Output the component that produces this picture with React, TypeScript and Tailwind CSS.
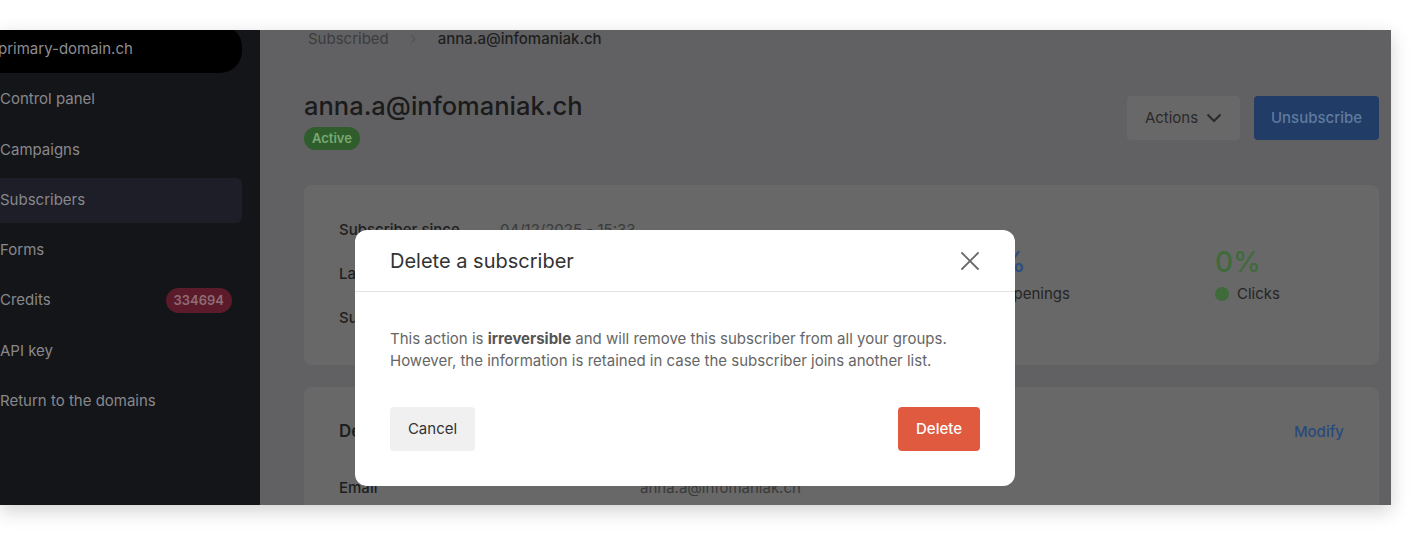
const navItems = [
  { label: "Control panel" },
  { label: "Campaigns" },
  { label: "Subscribers", active: true },
  { label: "Forms" },
  { label: "Credits", badge: "334694" },
  { label: "API key" },
  { label: "Return to the domains" },
];

const Sidebar = () => {
  return (
    <aside className="w-[260px] shrink-0 bg-[#141519] flex flex-col">
      <div className="mt-[-5px] h-[48px] w-[242px] bg-black rounded-r-[22px] flex items-center shrink-0">
        <span className="ml-[-2px] text-[15px] text-[#8c8c90]">primary-domain.ch</span>
      </div>
      <div className="mt-[4px] flex flex-col gap-[5.3px]">
        {navItems.map((item) => (
          <div
            key={item.label}
            className={`h-[45px] w-[242px] shrink-0 flex items-center justify-between pr-[10px] rounded-r-md ${
              item.active ? "bg-[#1d1e27]" : ""
            }`}
          >
            <span className="text-[15px] text-[#88888c]">{item.label}</span>
            {item.badge && (
              <span className="h-[25px] px-[8px] flex items-center rounded-full bg-[#5c1b2b] text-[13px] font-semibold text-[#8f6c74]">
                {item.badge}
              </span>
            )}
          </div>
        ))}
      </div>
    </aside>
  );
};

type StatProps = {
  value: string;
  label: string;
  valueColor: string;
  dotColor: string;
};

const Stat = ({ value, label, valueColor, dotColor }: StatProps) => {
  return (
    <div className="flex flex-col">
      <span className={`text-[28px] leading-[34px] font-medium ${valueColor}`}>{value}</span>
      <div className="flex items-center gap-[8px] mt-[5px] h-[20px]">
        <span className={`w-[14px] h-[14px] rounded-full ${dotColor}`} />
        <span className="text-[15px] text-[#252525]">{label}</span>
      </div>
    </div>
  );
};

const CloseIcon = () => (
  <svg width="20" height="20" viewBox="0 0 20 20" fill="none">
    <path d="M2 2L18 18M18 2L2 18" stroke="#6a6a6a" strokeWidth="1.8" strokeLinecap="round" />
  </svg>
);

const DeleteModal = () => {
  return (
    <div className="absolute left-[355px] top-[200px] w-[660px] h-[256px] bg-white rounded-[12px] flex flex-col">
      <div className="h-[62px] shrink-0 flex items-center justify-between pl-[35px] pr-[35px] border-b border-[#e2e2e2]">
        <h2 className="text-[20px] text-[#333333]">Delete a subscriber</h2>
        <CloseIcon />
      </div>
      <div className="px-[35px] pt-[36px]">
        <p className="text-[15px] leading-[22px] text-[#666666]">
          This action is <strong className="font-bold text-[#555555]">irreversible</strong> and will remove this
          subscriber from all your groups.
          <br />
          However, the information is retained in case the subscriber joins another list.
        </p>
        <div className="mt-[35px] flex justify-between">
          <button className="h-[44px] w-[85px] rounded-[4px] bg-[#f0f0f0] text-[15px] text-[#333333]">
            Cancel
          </button>
          <button className="h-[44px] w-[82px] rounded-[4px] bg-[#e05a40] text-[15px] font-medium text-white">
            Delete
          </button>
        </div>
      </div>
    </div>
  );
};

const InfoRow = ({ label, value }: { label: string; value: string }) => (
  <div className="flex h-[20px] items-center">
    <span className="w-[161px] text-[15px] font-medium text-[#1e1e1e]">{label}</span>
    <span className="text-[15px] text-[#3a3a3a]">{value}</span>
  </div>
);

const Main = () => {
  return (
    <main className="flex-1 bg-[#616163] pl-[44px] pr-[12px] flex flex-col">
      <div className="mt-[-1px] h-[20px] shrink-0 flex items-center text-[15px] pl-[4px]">
        <span className="text-[#3c3c3c]">Subscribed</span>
        <svg className="ml-[20px]" width="8" height="12" viewBox="0 0 8 12" fill="none">
          <path d="M2 2L6 6L2 10" stroke="#555" strokeWidth="1.2" />
        </svg>
        <span className="ml-[21px] font-medium text-[#1e1e1e]">anna.a@infomaniak.ch</span>
      </div>

      <div className="mt-[41px] shrink-0 flex justify-between items-start">
        <div className="flex flex-col items-start">
          <h1 className="text-[25.5px] leading-[32px] font-medium text-[#1b1b1b]">anna.a@infomaniak.ch</h1>
          <span className="mt-[5px] h-[23px] px-[8px] flex items-center rounded-full bg-[#2f5e2c] text-[13px] font-semibold text-[#79a873]">
            Active
          </span>
        </div>
        <div className="mt-[6px] flex gap-[14px]">
          <button className="h-[44px] w-[113px] rounded-[4px] bg-[#686868] flex items-center justify-center gap-[8px] text-[15px] text-[#2a2a2a]">
            Actions
            <svg width="16" height="10" viewBox="0 0 16 10" fill="none">
              <path d="M1.5 1.5L8 8L14.5 1.5" stroke="#2a2a2a" strokeWidth="2" />
            </svg>
          </button>
          <button className="h-[44px] w-[125px] rounded-[4px] bg-[#213c66] text-[15px] font-medium text-[#5f7b9f]">
            Unsubscribe
          </button>
        </div>
      </div>

      <section className="mt-[35px] h-[180px] shrink-0 rounded-[8px] bg-[#686868] pl-[35px] pt-[35px] flex">
        <div className="w-[641px] flex flex-col gap-[24px]">
          <InfoRow label="Subscriber since" value="04/12/2025 - 15:33" />
          <InfoRow label="Last activity" value="04/12/2025 - 15:33" />
          <InfoRow label="Subscription source" value="API" />
        </div>
        <div className="mt-[25px] flex">
          <div className="w-[235px]">
            <Stat value="0%" label="Openings" valueColor="text-[#2c4f80]" dotColor="bg-[#2c4f80]" />
          </div>
          <Stat value="0%" label="Clicks" valueColor="text-[#3f6b3b]" dotColor="bg-[#3f6b3b]" />
        </div>
      </section>

      <section className="mt-[22px] flex-1 shrink-0 rounded-t-[8px] bg-[#686868] pl-[35px] pr-[35px] pt-[33px]">
        <div className="flex justify-between items-center h-[24px]">
          <h3 className="text-[17px] font-semibold text-[#1e1e1e]">Details</h3>
          <span className="text-[15px] font-medium text-[#284a7c]">Modify</span>
        </div>
        <div className="mt-[34px] flex h-[20px] items-center">
          <span className="w-[301px] text-[15px] font-medium text-[#1e1e1e]">Email</span>
          <span className="text-[15px] text-[#3a3a3a]">anna.a@infomaniak.ch</span>
        </div>
      </section>
    </main>
  );
};

const App = () => {
  return (
    <div className="w-[1421px] h-[535px] bg-white overflow-hidden font-['Inter',sans-serif]">
      <div className="relative mt-[30px] w-[1391px] h-[475px] overflow-hidden flex shadow-[0_6px_18px_rgba(0,0,0,0.18)]">
        <Sidebar />
        <Main />
        <DeleteModal />
      </div>
    </div>
  );
};

export default App;
